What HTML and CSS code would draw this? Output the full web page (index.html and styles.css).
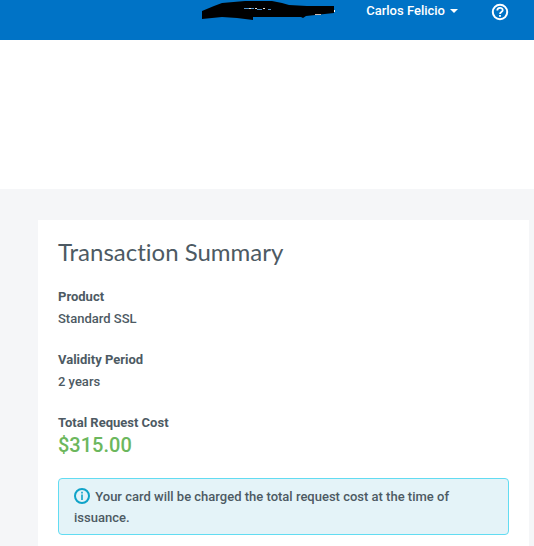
FILE: index.html
```
<!DOCTYPE html>
<html lang="en">
<head>
    <meta charset="UTF-8">
    <meta name="viewport" content="width=device-width, initial-scale=1.0">
    <title>Transaction Summary</title>
    <link rel="stylesheet" href="styles.css">
</head>
<body>
    <header class="top-bar">
        <svg class="account-mark" width="136" height="22" viewBox="0 0 136 22" aria-hidden="true">
            <path d="M2 11L14 6L22 3L45 1L72 1L82 3L89 5L107 6L134 6V13L106 16L103 18L101 17H53V20L37 18L22 17L2 19Z" fill="#000"/>
            <path d="M44 8.5H54M57 9.5H62M68 9.5H71" stroke="#4c8fc7" stroke-width="1"/>
            <path d="M49 8.5H51M55 8.5H57M63 8.5H65" stroke="#e8e4dc" stroke-width="1"/>
            <path d="M115 14.5H121" stroke="#c9b6ac" stroke-width="1"/>
            <path d="M134.5 10V12" stroke="#fff" stroke-width="1"/>
        </svg>
        <button class="user-menu" type="button">Carlos Felicio <span class="caret"></span></button>
        <button class="help" type="button" aria-label="Help">
            <svg width="18" height="18" viewBox="0 0 18 18" fill="none" stroke="#fff" stroke-width="2">
                <circle cx="9" cy="9" r="7.2"/>
                <path d="M6.3 7.4C6.3 4 11.7 4 11.7 7.2C11.7 9 9 8.9 9 10.9" stroke-width="1.8"/>
                <path d="M9 12V13.8" stroke-width="1.9"/>
            </svg>
        </button>
    </header>
    <div class="banner"></div>
    <main class="content">
        <section class="card">
            <h1>Transaction Summary</h1>
            <dl class="summary">
                <div class="summary-item">
                    <dt>Product</dt>
                    <dd>Standard SSL</dd>
                </div>
                <div class="summary-item">
                    <dt>Validity Period</dt>
                    <dd>2 years</dd>
                </div>
                <div class="summary-item">
                    <dt>Total Request Cost</dt>
                    <dd class="cost">$315.00</dd>
                </div>
            </dl>
            <p class="notice">
                <svg class="info-icon" width="16" height="16" viewBox="0 0 16 16" fill="none" stroke="#0fa3c8" aria-hidden="true">
                    <circle cx="8" cy="8" r="7" stroke-width="2"/>
                    <path d="M8 6.5V12M8 3.8V5.4" stroke-width="1.6"/>
                </svg>
                Your card will be charged the total request cost at the time of issuance.
            </p>
        </section>
    </main>
</body>
</html>
```
FILE: styles.css
```
* {
    box-sizing: border-box;
}

body {
    margin: 0;
    min-height: 100vh;
    display: flex;
    flex-direction: column;
    background-color: white;
    color: #4d5a63;
    font-family: Roboto, Arial, sans-serif;
    font-size: 13px;
    font-weight: 500;
    line-height: 22px;
}

.top-bar {
    height: 40px;
    display: flex;
    align-items: flex-start;
    justify-content: flex-end;
    padding-right: 25px;
    background-color: #0073c6;
}

.account-mark {
    margin-right: 30px;
}

.user-menu,
.help {
    display: flex;
    align-items: center;
    height: 22px;
    padding: 0;
    border: none;
    background: none;
    color: white;
    font: inherit;
    cursor: pointer;
}

.user-menu {
    margin-right: 33px;
}

.caret {
    margin-left: 5px;
    border-top: 4px solid white;
    border-left: 4px solid transparent;
    border-right: 4px solid transparent;
}

.help {
    height: 24px;
}

.banner {
    height: 149px;
}

.content {
    flex: 1;
    display: flex;
    padding: 31px 5px 0 38px;
    background-color: #f5f6f8;
}

.card {
    flex: 1;
    padding: 16px 20px 11px;
    background-color: white;
}

h1 {
    margin: 0;
    font-family: Lato, sans-serif;
    font-size: 24px;
    font-weight: 400;
    font-variant-ligatures: none;
    line-height: 32px;
}

.summary {
    display: flex;
    flex-direction: column;
    gap: 19px;
    margin: 18px 0 22px;
}

dt {
    font-weight: 700;
}

dd {
    margin: 0;
}

.cost {
    color: #6cb75d;
    font-size: 20px;
}

.notice {
    margin: 0;
    padding: 7px 15px 6px;
    border: 1px solid #62dcf2;
    border-radius: 4px;
    background-color: #e4f3f8;
    line-height: 21px;
}

.info-icon {
    margin-right: 2px;
    vertical-align: text-bottom;
}
```
